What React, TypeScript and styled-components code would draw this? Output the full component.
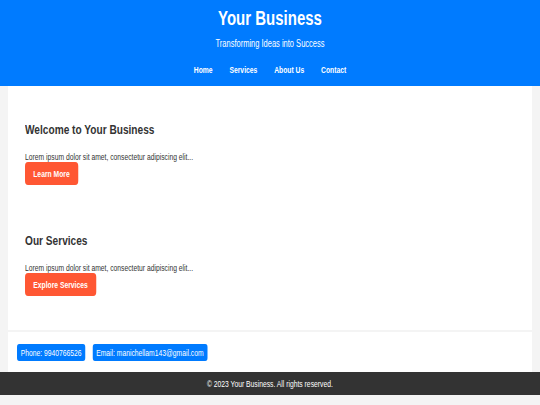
import styled, { createGlobalStyle } from 'styled-components';

// the reference type is a narrow grotesque; squeeze Liberation Sans to match
const NARROW = 'scaleX(0.75)';

const GlobalStyle = createGlobalStyle`
  body {
    margin: 0;
    background: #f4f4f4;
    font-family: "Liberation Sans", Arial, sans-serif;
    color: #333;
  }
`;

const Header = styled.header`
  background: #007bff;
  color: #fff;
  text-align: center;
  padding: 6px 0 10px;
`;

const Title = styled.h1`
  margin: 0;
  font-size: 20px;
  line-height: 24px;
  font-weight: bold;
  transform: ${NARROW};
`;

const Tagline = styled.p`
  margin: 8px 0 0;
  font-size: 10px;
  line-height: 12px;
  transform: ${NARROW};
`;

const Nav = styled.nav`
  display: flex;
  justify-content: center;
  gap: 22.5px;
  margin-top: 14px;
  transform: ${NARROW};
`;

const NavLink = styled.a`
  color: #fff;
  font-size: 9px;
  line-height: 12px;
  font-weight: bold;
  text-decoration: none;
`;

const Main = styled.main`
  background: #fff;
  margin: 0 8px;
  padding: 35px 17px 34px;
`;

const Column = styled.div`
  display: flex;
  flex-direction: column;
  gap: 47px;
  transform: ${NARROW};
  transform-origin: left center;
`;

const Section = styled.section`
  display: flex;
  flex-direction: column;
  align-items: flex-start;
`;

const Heading = styled.h2`
  margin: 0 0 13px;
  font-size: 13.5px;
  line-height: 18px;
  font-weight: bold;
`;

const Text = styled.p`
  margin: 0;
  font-size: 9px;
  line-height: 10px;
`;

const Button = styled.a`
  display: inline-flex;
  align-items: center;
  height: 23px;
  padding: 0 11px;
  background: #ff5733;
  color: #fff;
  border-radius: 4px;
  font-size: 9px;
  font-weight: bold;
  text-decoration: none;
`;

const Contact = styled.section`
  background: #fff;
  margin: 2px 8px 0;
  padding: 12px 9px 11px;
`;

const ChipRow = styled.div`
  display: flex;
  gap: 9.5px;
  transform: ${NARROW};
  transform-origin: left center;
`;

const Chip = styled.span`
  background: #007bff;
  color: #fff;
  border-radius: 3px;
  padding: 0 5px;
  height: 17px;
  display: inline-flex;
  align-items: center;
  font-size: 9px;
`;

const Footer = styled.footer`
  background: #333;
  color: #fff;
  text-align: center;
  height: 23px;
  display: flex;
  align-items: center;
  justify-content: center;
`;

const FooterText = styled.p`
  margin: 0;
  font-size: 9px;
  transform: ${NARROW};
`;

export default function App() {
  return (
    <>
      <GlobalStyle />
      <Header>
        <Title>Your Business</Title>
        <Tagline>Transforming Ideas into Success</Tagline>
        <Nav>
          <NavLink href="#">Home</NavLink>
          <NavLink href="#">Services</NavLink>
          <NavLink href="#">About Us</NavLink>
          <NavLink href="#">Contact</NavLink>
        </Nav>
      </Header>
      <Main>
        <Column>
          <Section>
            <Heading>Welcome to Your Business</Heading>
            <Text>Lorem ipsum dolor sit amet, consectetur adipiscing elit...</Text>
            <Button href="#">Learn More</Button>
          </Section>
          <Section>
            <Heading>Our Services</Heading>
            <Text>Lorem ipsum dolor sit amet, consectetur adipiscing elit...</Text>
            <Button href="#">Explore Services</Button>
          </Section>
        </Column>
      </Main>
      <Contact>
        <ChipRow>
          <Chip>Phone: 9940766526</Chip>
          <Chip>Email: manichellam143@gmail.com</Chip>
        </ChipRow>
      </Contact>
      <Footer>
        <FooterText>© 2023 Your Business. All rights reserved.</FooterText>
      </Footer>
    </>
  );
}
